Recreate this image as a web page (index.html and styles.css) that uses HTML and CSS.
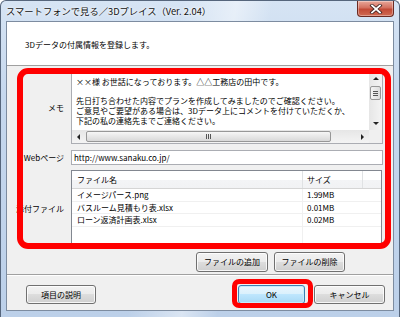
FILE: index.html
```html
<!DOCTYPE html>
<html lang="ja">
<head>
<meta charset="utf-8">
<title>スマートフォンで見る／3Dプレイス</title>
<link rel="stylesheet" href="styles.css">
</head>
<body>
<div class="window">
  <div class="titlebar">
    <span class="title">スマートフォンで見る／3Dプレイス（Ver. 2.04）</span>
    <div class="close">
      <svg width="14" height="10" viewBox="0 0 14 10">
        <path d="M3 1.5 L11 8.5 M11 1.5 L3 8.5" stroke="#3a2020" stroke-width="3.4" stroke-linecap="square" fill="none"/>
        <path d="M3 1.5 L11 8.5 M11 1.5 L3 8.5" stroke="#ffffff" stroke-width="1.8" stroke-linecap="square" fill="none"/>
      </svg>
    </div>
  </div>
  <div class="client">
    <div class="header">3Dデータの付属情報を登録します。</div>
    <div class="body">
      <div class="form">
        <div class="label">メモ</div>
        <div class="memo">
          <div class="memo-main">
            <div class="memo-text">××様 お世話になっております。△△工務店の田中です。

先日打ち合わせた内容でプランを作成してみましたのでご確認ください。
ご意見やご要望がある場合は、3Dデータ上にコメントを付けていただくか、
下記の私の連絡先までご連絡ください。</div>
            <div class="vscroll">
              <div class="sb-btn"><span class="tri tri-up"></span></div>
              <div class="vtrack"><div class="vthumb"><span class="grip-h"></span><span class="grip-h"></span><span class="grip-h"></span></div></div>
              <div class="sb-btn"><span class="tri tri-down"></span></div>
            </div>
          </div>
          <div class="hrow">
            <div class="hscroll">
              <div class="sb-btn"><span class="tri tri-left"></span></div>
              <div class="htrack"><div class="hthumb"><span class="grip-v"></span><span class="grip-v"></span><span class="grip-v"></span></div></div>
              <div class="sb-btn"><span class="tri tri-right"></span></div>
            </div>
            <div class="corner"></div>
          </div>
        </div>
        <div class="label">Webページ</div>
        <div class="input">http://www.sanaku.co.jp/</div>
        <div class="label">添付ファイル</div>
        <div class="list">
          <div class="list-head">
            <div class="col-name">ファイル名</div>
            <div class="col-size">サイズ</div>
            <div class="col-rest"></div>
          </div>
          <div class="list-row"><div class="col-name">イメージパース.png</div><div class="col-size">1.99MB</div><div class="col-rest"></div></div>
          <div class="list-row"><div class="col-name">バスルーム見積もり表.xlsx</div><div class="col-size">0.01MB</div><div class="col-rest"></div></div>
          <div class="list-row"><div class="col-name">ローン返済計画表.xlsx</div><div class="col-size">0.02MB</div><div class="col-rest"></div></div>
          <div class="list-fill"><div class="col-name"></div><div class="col-size"></div><div class="col-rest"></div></div>
        </div>
      </div>
      <div class="file-buttons">
        <button class="btn w72">ファイルの追加</button>
        <button class="btn w71">ファイルの削除</button>
      </div>
    </div>
    <div class="footer">
      <button class="btn w70">項目の説明</button>
      <div class="spacer"></div>
      <button class="btn btn-default w67">OK</button>
      <button class="btn w71">キャンセル</button>
    </div>
  </div>
  <div class="mark mark-form"></div>
  <div class="mark mark-ok"></div>
</div>
</body>
</html>
```

FILE: styles.css
```css
* { box-sizing: border-box; }
html, body { margin: 0; padding: 0; }
body {
  width: 400px;
  height: 317px;
  overflow: hidden;
  background: #ffffff;
  font-family: "Noto Sans CJK JP", "Noto Sans", sans-serif;
  font-size: 8px;
  color: #000;
}
.window {
  position: relative;
  width: 400px;
  height: 317px;
  border: 1px solid #56667c;
  border-bottom: none;
  border-radius: 6px 6px 0 0;
  padding: 0 5px 6px 5px;
  display: flex;
  flex-direction: column;
  background:
    linear-gradient(100deg, rgba(255,255,255,0) 40%, rgba(255,255,255,0.45) 52%, rgba(255,255,255,0) 60%),
    linear-gradient(to bottom, #d6e4f4 0%, #c6d8ee 30%, #bcd0e9 100%);
}
.titlebar {
  height: 20px;
  display: flex;
  align-items: flex-start;
  flex: none;
}
.title {
  font-size: 9.3px;
  line-height: 20px;
  padding-left: 0;
  color: #111;
  white-space: nowrap;
  text-shadow: 0 0 4px #fff, 0 0 2px #fff;
}
.close {
  margin-left: auto;
  margin-right: 0;
  width: 37px;
  height: 16px;
  border: 1px solid #6b2a22;
  border-top: none;
  border-radius: 0 0 4px 4px;
  background: linear-gradient(to bottom, #e8a89a 0%, #d3705f 45%, #c24a36 55%, #d06a52 100%);
  display: flex;
  align-items: center;
  justify-content: center;
  box-shadow: inset 0 0 0 1px rgba(255,255,255,0.35);
}
.close svg { display: block; }
.client {
  flex: 1;
  border: 1px solid #7d8ca0;
  background: #f0f0f0;
  display: flex;
  flex-direction: column;
}
.header {
  height: 44px;
  flex: none;
  background: #fff;
  border-bottom: 1px solid #a0a0a0;
  padding-left: 18px;
  display: flex;
  align-items: center;
  padding-top: 1px;
}
.body {
  padding: 5px 9px 2px 0;
  border-bottom: 1px solid #a0a0a0;
}
.form {
  display: grid;
  grid-template-columns: 57px 312px;
  column-gap: 7px;
  row-gap: 6px;
  grid-template-rows: 73px 15px 76px;
}
.form .list { margin-top: -1px; }
.label {
  text-align: right;
  align-self: center;
  white-space: nowrap;
  line-height: 10px;
}
.memo {
  border: 1px solid #abadb3;
  background: #fff;
  display: flex;
  flex-direction: column;
  overflow: hidden;
}
.memo-main {
  flex: 1;
  display: flex;
  min-height: 0;
}
.memo-text {
  flex: 1;
  white-space: pre;
  overflow: hidden;
  line-height: 9.7px;
  padding: 5px 0 0 4px;
}
.vscroll {
  width: 13px;
  flex: none;
  display: flex;
  flex-direction: column;
  background: linear-gradient(to right, #e6e6e6, #f4f4f4);
}
.sb-btn {
  width: 13px;
  height: 13px;
  flex: none;
  display: flex;
  align-items: center;
  justify-content: center;
}
.vtrack { flex: 1; padding: 0 1px; }
.vthumb {
  height: 14px;
  margin-top: 1px;
  border: 1px solid #979797;
  border-radius: 2px;
  background: linear-gradient(to right, #f4f4f4, #dcdcdc);
  display: flex;
  flex-direction: column;
  align-items: center;
  justify-content: center;
  gap: 1px;
}
.grip-h { display: block; width: 5px; height: 1px; background: #555; }
.hrow { height: 13px; flex: none; display: flex; }
.hscroll {
  flex: 1;
  display: flex;
  background: linear-gradient(to bottom, #e6e6e6, #f4f4f4);
}
.htrack { flex: 1; padding: 1px 0; }
.hthumb {
  height: 11px;
  margin-left: 1px;
  width: 245px;
  border: 1px solid #979797;
  border-radius: 2px;
  background: linear-gradient(to bottom, #f6f6f6, #d8d8d8);
  display: flex;
  align-items: center;
  justify-content: center;
  gap: 1px;
}
.grip-v { display: block; width: 1px; height: 5px; background: #555; }
.corner { width: 13px; flex: none; background: #f0f0f0; }
.tri { width: 0; height: 0; display: block; }
.tri-up { border-left: 3px solid transparent; border-right: 3px solid transparent; border-bottom: 3px solid #222; }
.tri-down { border-left: 3px solid transparent; border-right: 3px solid transparent; border-top: 3px solid #222; }
.tri-left { border-top: 3px solid transparent; border-bottom: 3px solid transparent; border-right: 3px solid #222; }
.tri-right { border-top: 3px solid transparent; border-bottom: 3px solid transparent; border-left: 3px solid #222; }
.input {
  border: 1px solid #abadb3;
  background: #fff;
  padding-left: 2px;
  line-height: 13px;
  white-space: nowrap;
}
.list {
  border: 1px solid #828790;
  background: #fff;
  display: flex;
  flex-direction: column;
  width: 311px;
}
.list-head {
  height: 18px;
  display: flex;
  background: linear-gradient(to bottom, #ffffff 0%, #ffffff 50%, #f3f4f6 51%, #f1f2f4 100%);
  border-bottom: 1px solid #d5d5d5;
  flex: none;
}
.list-head > div { display: flex; align-items: center; }
.list-head .col-name { border-right: 1px solid #e0e2e4; }
.list-head .col-size { border-right: 1px solid #e0e2e4; }
.col-name { width: 231px; padding-left: 5px; white-space: nowrap; }
.col-size { width: 60px; padding-left: 4px; white-space: nowrap; }
.col-rest { flex: 1; }
.list-row {
  height: 12.5px;
  display: flex;
  border-bottom: 1px solid #f0f0f0;
  line-height: 11.5px;
  flex: none;
}
.list-row .col-name, .list-fill .col-name { border-right: 1px solid #f0f0f0; }
.list-fill { flex: 1; display: flex; }
.file-buttons {
  display: flex;
  gap: 6px;
  margin-top: 5px;
  padding-left: 189px;
}
.btn {
  font-family: inherit;
  font-size: 8px;
  color: #000;
  height: 20px;
  padding: 0;
  border: 1px solid #707070;
  border-radius: 3px;
  background: linear-gradient(to bottom, #f2f2f2 0%, #ebebeb 49%, #dddddd 50%, #cfcfcf 100%);
  box-shadow: inset 0 0 0 1px rgba(255,255,255,0.8);
  line-height: 10px;
}
.w72 { width: 72px; }
.w71 { width: 71px; }
.w70 { width: 70px; }
.w67 { width: 67px; }
.btn-default {
  border-color: #3c7fb1;
  background: linear-gradient(to bottom, #eaf6fd 0%, #d9f0fc 49%, #bee6fd 50%, #a7d9f5 100%);
  box-shadow: inset 0 0 0 1px #c6ecfb;
}
.footer {
  flex: 1;
  display: flex;
  align-items: flex-start;
  padding: 9px 8px 0 19px;
  gap: 9px;
  border-top: 1px solid #fff;
}
.footer .btn { height: 19px; }
.spacer { flex: 1; }
.mark {
  position: absolute;
  border: 5px solid #ff0000;
  pointer-events: none;
}
.mark-form {
  left: 16px;
  top: 67px;
  width: 374px;
  height: 181px;
  border-radius: 11px;
  border-width: 6px;
}
.mark-ok {
  left: 231px;
  top: 278px;
  width: 81px;
  height: 29px;
  border-radius: 7px;
}
```
